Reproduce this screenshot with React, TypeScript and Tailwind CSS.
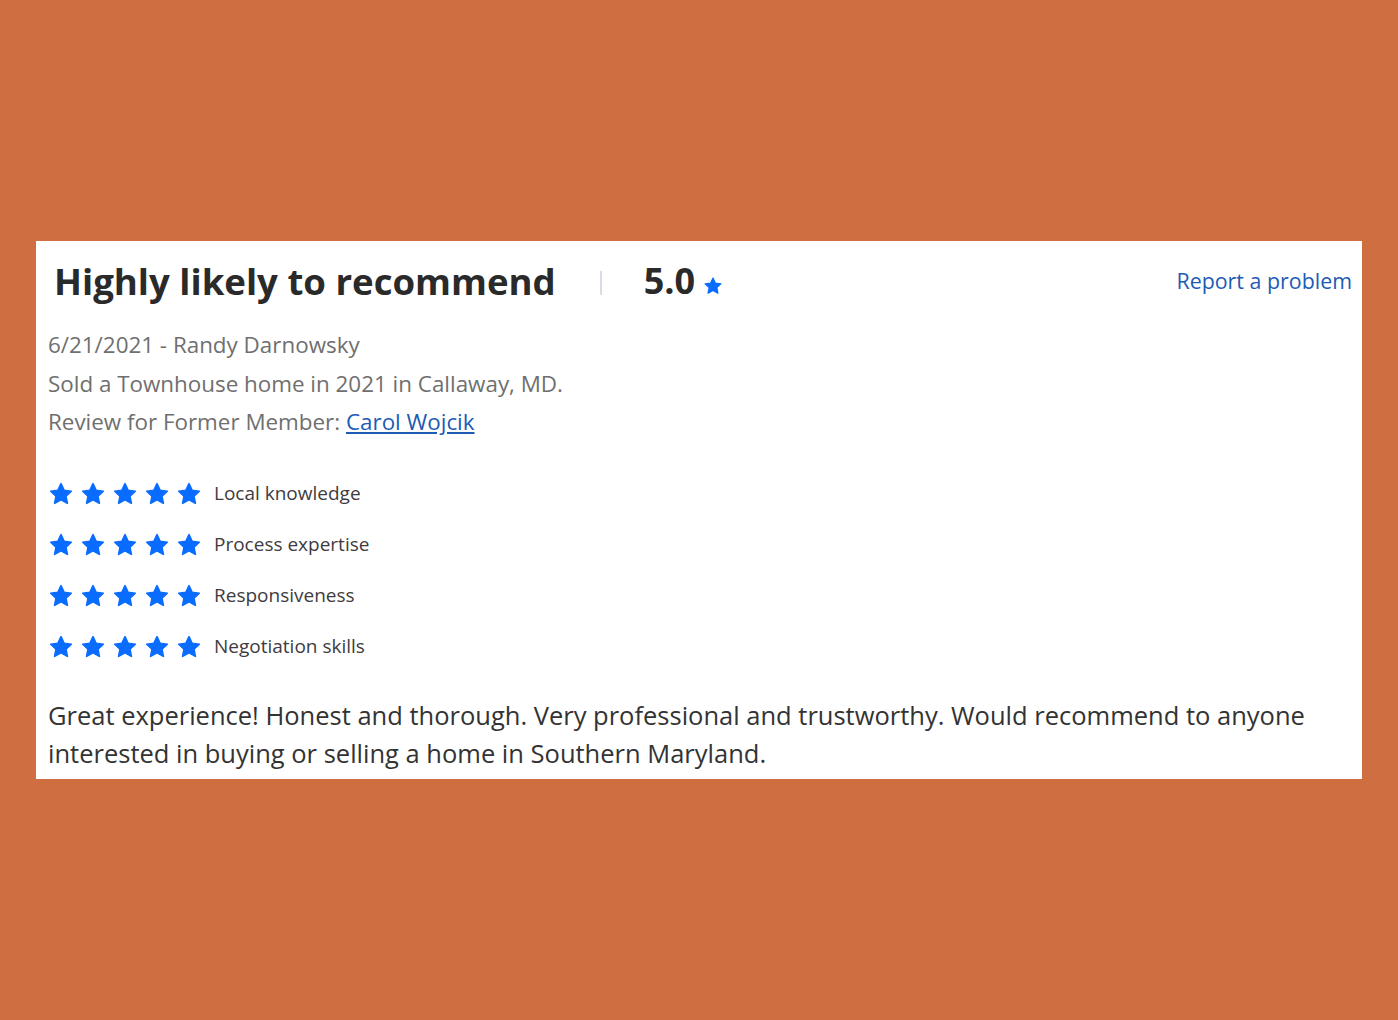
import React from "react";

const categories = ["Local knowledge", "Process expertise", "Responsiveness", "Negotiation skills"];

function Star({ className }: { className: string }) {
  return (
    <svg viewBox="0 0 24 24" className={className} fill="#0a6cff" stroke="#0a6cff" strokeWidth={1.5} strokeLinejoin="round">
      <path d="M12 2.5l2.9 6.1 6.6.8-4.9 4.6 1.3 6.6L12 17.3l-5.9 3.3 1.3-6.6-4.9-4.6 6.6-.8z" />
    </svg>
  );
}

export default function App() {
  return (
    <div className="min-h-[1020px] w-full bg-[#cf6f41] pt-[241px] pl-[36px]" style={{ fontFamily: '"Open Sans", sans-serif' }}>
      <div className="w-[1326px] h-[538px] bg-white">
        <div className="flex items-center h-[80px] pl-[18px] pr-[10px]">
          <h1 className="text-[36.6px] font-bold text-[#2a2a2a]">Highly likely to recommend</h1>
          <div className="w-[2px] h-[24px] bg-[#d6dde5] ml-[44px] mr-[42px] mt-[4px]" />
          <span className="text-[36px] font-bold text-[#2a2a2a]">5.0</span>
          <Star className="w-[20px] h-[20px] ml-[8px] mt-[10px]" />
          <a href="#" className="ml-auto text-[21.4px] text-[#1d5bb5]">Report a problem</a>
        </div>
        <div className="pl-[12px] pt-[5px] text-[22.4px] leading-[38.5px] text-[#6f6f6f]">
          <p>6/21/2021 - Randy Darnowsky</p>
          <p>Sold a Townhouse home in 2021 in Callaway, MD.</p>
          <p>
            Review for Former Member: <a href="#" className="text-[#1d5bb5] underline">Carol Wojcik</a>
          </p>
        </div>
        <div className="pl-[12px] mt-[39px] flex flex-col gap-[25px]">
          {categories.map((c) => (
            <div key={c} className="flex items-center h-[26px]">
              <div className="flex gap-[6px]">
                {[0, 1, 2, 3, 4].map((i) => (
                  <Star key={i} className="w-[26px] h-[26px]" />
                ))}
              </div>
              <span className="ml-[12px] text-[19px] text-[#3f3b3e]">{c}</span>
            </div>
          ))}
        </div>
        <p className="pl-[12px] pr-[40px] mt-[36px] text-[25.5px] leading-[38px] text-[#333]">
          Great experience! Honest and thorough. Very professional and trustworthy. Would recommend to anyone interested in buying or selling a home in Southern Maryland.
        </p>
      </div>
    </div>
  );
}
